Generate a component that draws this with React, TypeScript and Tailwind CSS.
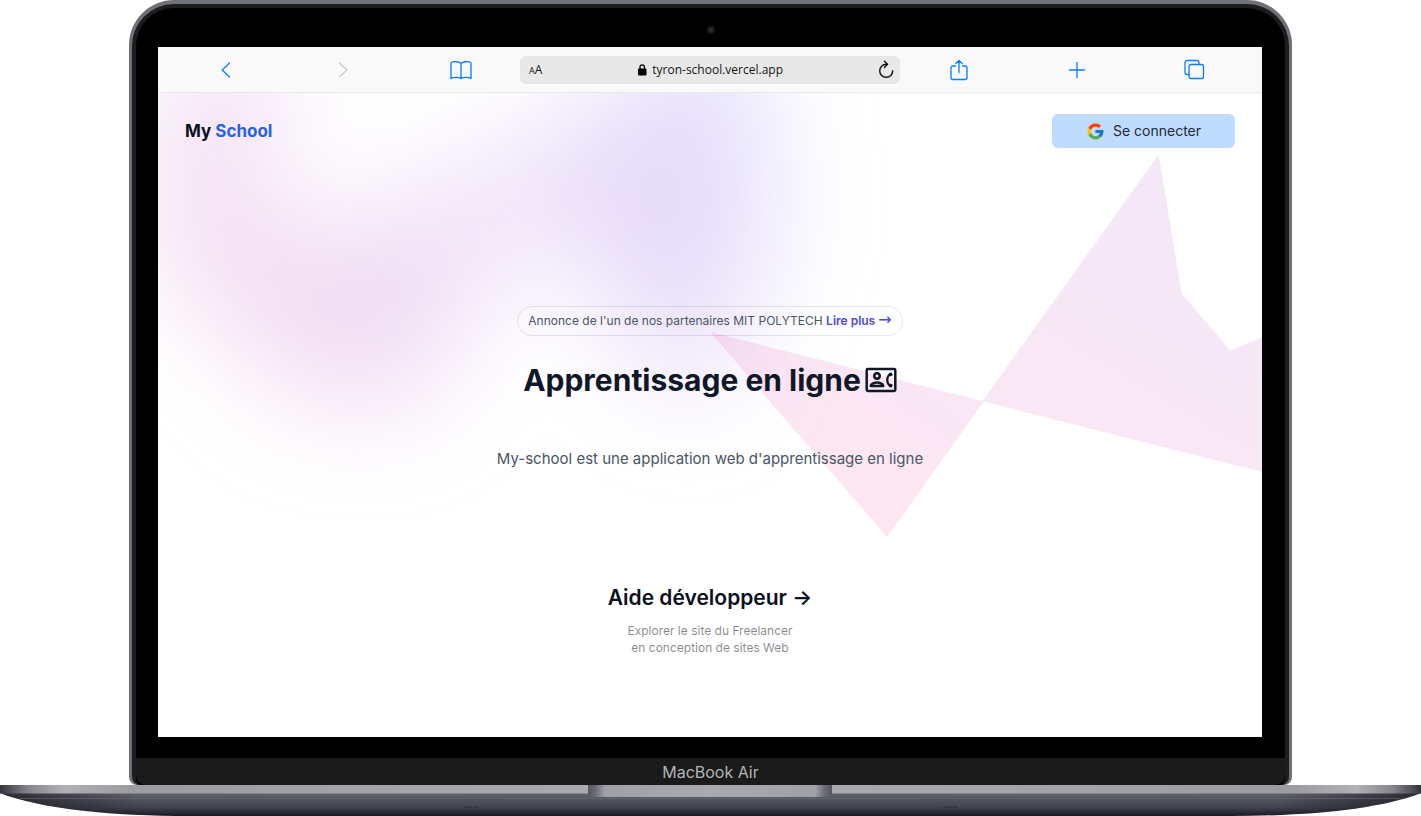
import type { ReactNode } from "react";
import { FcGoogle } from "react-icons/fc";

const SHAPE =
  "bg-linear-to-tr from-[#ff80b5] to-[#9089fc] aspect-[1155/678] [clip-path:polygon(74.1%_44.1%,100%_61.6%,97.5%_26.9%,85.5%_0.1%,80.7%_2%,72.5%_32.5%,60.2%_62.4%,52.4%_68.1%,47.5%_58.3%,45.2%_34.5%,27.5%_76.7%,0.1%_64.9%,17.9%_100%,27.6%_76.8%,76.1%_97.7%,74.1%_44.1%)]";

function ToolButton({ label, disabled, children }: { label: string; disabled?: boolean; children: ReactNode }) {
  return (
    <button
      type="button"
      aria-label={label}
      disabled={disabled}
      className="flex h-full items-center justify-center text-[#0a7cff] disabled:text-[#c9c9c9]"
    >
      <svg width="24" height="24" viewBox="0 0 24 24" fill="none" stroke="currentColor" strokeWidth="1.3" strokeLinecap="round" strokeLinejoin="round">
        {children}
      </svg>
    </button>
  );
}

function BrowserBar() {
  return (
    <div className="grid h-[46px] shrink-0 grid-cols-[repeat(3,1fr)_35%_repeat(3,1fr)] items-center border-b border-[#e9e9e9] bg-[#f9f9f9] px-[9px]">
      <ToolButton label="Précédent">
        <path d="M15.5 5 8.2 12l7.300 7" />
      </ToolButton>
      <ToolButton label="Suivant" disabled>
        <path d="M8.5 5l7.300 7-7.300 7" />
      </ToolButton>
      <ToolButton label="Signets">
        <path d="M12 5.500v15M12 5.500C10.500 3.700 4.500 3 2.600 4.500Q2 5 2 5.800v14.700C4.500 19 9.500 19 12 20.500c2.500-1.500 7.500-1.500 10 0V5.800Q22 5 21.400 4.500C19.500 3 13.500 3.700 12 5.500z" />
      </ToolButton>
      <div className="flex h-7 items-center justify-between rounded-md bg-[#e8e8e8] px-[9px] font-['Open_Sans','Noto_Sans',sans-serif] text-[#151515]">
        <button type="button" aria-label="Taille du texte" className="flex items-baseline text-xs">
          <span className="text-[9px]">A</span>A
        </button>
        <span className="flex items-center gap-1 text-xs">
          <svg width="12" height="14" viewBox="0 0 12 14" fill="none">
            <rect x="2" y="5.500" width="8.500" height="7" rx="1" fill="#000" />
            <path d="M4 6.500V4a2.200 2.200 0 0 1 4.400 0v2.500" stroke="#000" strokeWidth="1.300" />
          </svg>
          tyron-school.vercel.app
        </span>
        <button type="button" aria-label="Actualiser" className="-mr-1">
          <svg width="18" height="20" viewBox="0 0 18 20" fill="none" stroke="#111" strokeWidth="1.400" strokeLinecap="round" strokeLinejoin="round">
            <path d="M10 4.300H9.200A6.500 6.500 0 1 0 15.700 10.800" />
            <path d="M7.400 1.200l3.200 3.100-3.200 3.100" />
          </svg>
        </button>
      </div>
      <ToolButton label="Partager">
        <path d="M8.500 8H6a2 2 0 0 0-2 2v9.500a2 2 0 0 0 2 2h12a2 2 0 0 0 2-2V10a2 2 0 0 0-2-2h-2.500M12 14.500V2.500M8.800 5.500 12 2.500l3.200 3" />
      </ToolButton>
      <ToolButton label="Nouvel onglet">
        <path d="M12 4.500v15M4.500 12h15" />
      </ToolButton>
      <ToolButton label="Onglets">
        <rect x="7" y="6.500" width="14.500" height="14" rx="2" />
        <path d="M7 16.500H5a2 2 0 0 1-2-2V4.500a2 2 0 0 1 2-2h10a2 2 0 0 1 2 2v2" />
      </ToolButton>
    </div>
  );
}

function ContactIcon() {
  return (
    <svg width="32" height="32" viewBox="0 0 32 32" fill="none" stroke="currentColor" strokeWidth="2.500" strokeLinejoin="round" aria-hidden="true">
      <rect x="1.700" y="5" width="28.600" height="22" rx="1.200" />
      <circle cx="12" cy="12" r="2.700" />
      <path d="M5.800 22v-.4c0-2 3.900-3.100 6.200-3.100s6.200 1.100 6.200 3.100v.4z" />
      <path d="M25.600 9.600q-3.400 2.400-3.400 6.400t3.400 6.400" strokeWidth="2.200" />
      <path d="M25 9l1.700 2.800M25 23l1.700-2.800" strokeWidth="3" />
    </svg>
  );
}

function Backdrop() {
  return (
    <div aria-hidden="true" className="pointer-events-none absolute inset-0 -z-10 overflow-hidden">
      <div className="absolute inset-x-0 -top-[272px] overflow-hidden blur-[55px]">
        <div className={`${SHAPE} relative left-[calc(50%-411px)] w-[995px] -translate-x-1/2 rotate-30 opacity-30`} />
      </div>
      <div className="absolute inset-x-0 -top-[140px] overflow-hidden">
        <div className={`${SHAPE} relative left-[calc(50%-1px)] w-[995px] opacity-20`} />
      </div>
    </div>
  );
}

function Site() {
  return (
    <div className="relative isolate flex flex-1 flex-col bg-white text-[#0b1020]">
      <Backdrop />
      <header className="flex items-center justify-between px-[27px] pt-[21px]">
        <a href="#accueil" className="text-[17px] leading-[34px] font-bold">
          My <span className="text-[#2563eb]">School</span>
        </a>
        <button type="button" className="flex h-[34px] w-[183px] items-center justify-center gap-2 rounded-md bg-[#bfdbfe] text-sm text-[#1f2937]">
          <FcGoogle size={19} />
          Se connecter
        </button>
      </header>
      <main className="flex flex-1 flex-col items-center pt-[158px] text-center">
        <p className="rounded-full border border-gray-900/10 px-[10px] py-1 text-xs leading-5 text-gray-600">
          Annonce de l'un de nos partenaires MIT POLYTECH{" "}
          <a href="#annonce" className="font-semibold text-[#4f46e5]">
            Lire plus <span aria-hidden="true" className="font-['DejaVu_Sans',sans-serif] text-base leading-none font-normal">→</span>
          </a>
        </p>
        <h1 className="mt-6 flex items-center gap-1 text-[30px] leading-10 font-bold text-gray-900">
          Apprentissage en ligne
          <ContactIcon />
        </h1>
        <p className="mt-[45px] text-[15px] leading-7 text-gray-600">My-school est une application web d'apprentissage en ligne</p>
        <a href="#aide" className="mt-[111px] block">
          <h2 className="text-[21px] leading-7 font-semibold">
            Aide développeur <span aria-hidden="true">→</span>
          </h2>
          <p className="mt-[10px] text-xs leading-[17px] text-[#0b1020]/50">
            Explorer le site du Freelancer
            <br />
            en conception de sites Web
          </p>
        </a>
      </main>
    </div>
  );
}

function LaptopBase() {
  return (
    <svg className="block h-[31px] w-full shrink-0" viewBox="0 0 1421 31" preserveAspectRatio="none" aria-hidden="true">
      <defs>
        <linearGradient id="deck" x1="0" x2="1" y1="0" y2="0">
          <stop offset="0" stopColor="#33333d" />
          <stop offset=".008" stopColor="#55555e" />
          <stop offset=".02" stopColor="#85858c" />
          <stop offset=".045" stopColor="#b0b0b6" />
          <stop offset=".09" stopColor="#9c9ca3" />
          <stop offset=".4" stopColor="#a9a9b0" />
          <stop offset=".6" stopColor="#a9a9b0" />
          <stop offset=".91" stopColor="#9c9ca3" />
          <stop offset=".955" stopColor="#b0b0b6" />
          <stop offset=".98" stopColor="#85858c" />
          <stop offset=".992" stopColor="#55555e" />
          <stop offset="1" stopColor="#33333d" />
        </linearGradient>
        <linearGradient id="under" x1="0" x2="0" y1="0" y2="1">
          <stop offset="0" stopColor="#66666e" />
          <stop offset=".2" stopColor="#575861" />
          <stop offset=".6" stopColor="#43444f" />
          <stop offset=".88" stopColor="#272733" />
          <stop offset="1" stopColor="#17171f" />
        </linearGradient>
        <linearGradient id="notch" x1="0" x2="1" y1="0" y2="0">
          <stop offset="0" stopColor="#55555e" />
          <stop offset=".03" stopColor="#6b6b73" />
          <stop offset=".07" stopColor="#a0a0a7" />
          <stop offset=".5" stopColor="#a9a9b0" />
          <stop offset=".93" stopColor="#a0a0a7" />
          <stop offset=".97" stopColor="#6b6b73" />
          <stop offset="1" stopColor="#55555e" />
        </linearGradient>
        <linearGradient id="shade" x1="0" x2="1" y1="0" y2="0">
          <stop offset="0" stopColor="#12121a" stopOpacity=".7" />
          <stop offset=".1" stopColor="#12121a" stopOpacity="0" />
          <stop offset=".9" stopColor="#12121a" stopOpacity="0" />
          <stop offset="1" stopColor="#12121a" stopOpacity=".7" />
        </linearGradient>
      </defs>
      <path d="M0 8h1421C1380 24 1310 31 1230 31H191C111 31 41 24 0 8z" fill="url(#under)" />
      <path d="M0 8h1421C1380 24 1310 31 1230 31H191C111 31 41 24 0 8z" fill="url(#shade)" />
      <path d="M20 13.500h1381" stroke="#6b6b74" strokeWidth=".6" />
      <rect width="1421" height="8.500" fill="url(#deck)" />
      <path d="M588 0h244v9q-1 3-8 3H596q-7 0-8-3z" fill="url(#notch)" />
      <path d="M464 22h14M943 22h14" stroke="#2c2c36" strokeWidth="1" strokeDasharray="4 1" />
    </svg>
  );
}

export default function App() {
  return (
    <div className="flex min-h-screen flex-col overflow-hidden bg-white font-['Inter',sans-serif]">
      <div className="mx-[9.08%] flex flex-1 rounded-t-[45px] rounded-b-lg bg-[#707078] px-[3px] pt-1">
        <div className="flex flex-1 flex-col rounded-t-[42px] rounded-b-lg border-4 border-b-0 border-[#1c1d1f] bg-black">
          <div className="flex h-[39px] shrink-0 items-center justify-center pt-1">
            <span className="size-2 rounded-full border-2 border-[#17181a] bg-[#2b2c30]" />
          </div>
          <div className="mr-[23px] ml-[22px] flex flex-1 flex-col overflow-hidden">
            <BrowserBar />
            <Site />
          </div>
          <div className="mt-[21px] flex h-[27px] shrink-0 items-center justify-center rounded-b-[10px] bg-[#1a1a1a] text-base text-[#b4b4b8]">
            MacBook Air
          </div>
        </div>
      </div>
      <LaptopBase />
    </div>
  );
}
